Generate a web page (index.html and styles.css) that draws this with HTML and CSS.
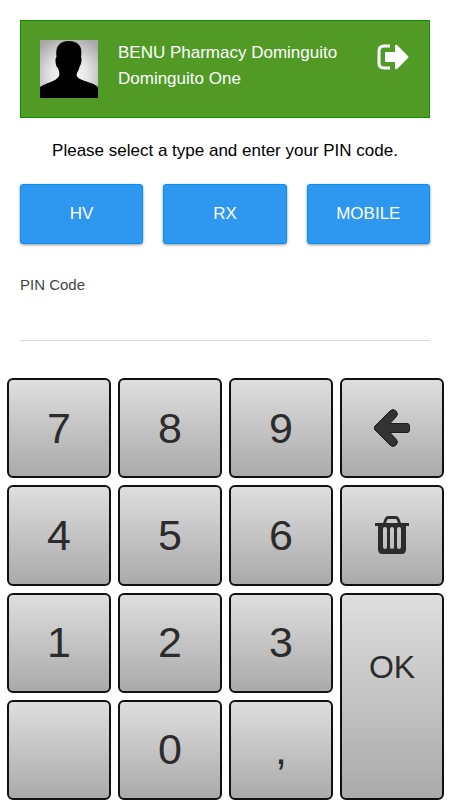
FILE: index.html
```html
<!DOCTYPE html>
<html lang="en">
<head>
  <meta charset="utf-8">
  <meta name="viewport" content="width=device-width, initial-scale=1">
  <title>BENU Pharmacy Dominguito</title>
  <link rel="stylesheet" href="styles.css">
</head>
<body>
  <form class="login">
    <header class="account">
      <svg class="avatar" viewBox="0 0 58 58" role="img" aria-label="User photo">
        <defs>
          <radialGradient id="backdrop" cx="0.5" cy="0.6" r="0.7">
            <stop offset="0" stop-color="#fff"/>
            <stop offset="0.45" stop-color="#e6e6e6"/>
            <stop offset="1" stop-color="#a8a8a8"/>
          </radialGradient>
        </defs>
        <rect width="58" height="58" fill="url(#backdrop)"/>
        <path d="M0 58V47C5 43 16 42 19 36C20 34 19 31 18 28C16 27 15.500 23 15.500 20C15.500 18 16 18 16.500 17C15 6 20 1 28.500 1C38 1 43 6 41 17C42 18 41.500 23 40.500 25C39.500 26 39 30 37 33C36 36 37 37 40 39C46 42 54 43 58 47V58Z"/>
      </svg>
      <div class="names">
        <div>BENU Pharmacy Dominguito</div>
        <div>Dominguito One</div>
      </div>
      <button class="logout" type="button" aria-label="Log out">
        <svg viewBox="0 0 32 26" width="32" height="26">
          <path d="M13 2H7Q2 2 2 7V19Q2 24 7 24H13" fill="none" stroke="#fff" stroke-width="3"/>
          <path d="M9 8H18V2Q18 0 20 1L31 12Q32 13 31 14L20 25Q18 26 18 24V18H9Q8 18 8 17V9Q8 8 9 8Z" fill="#fff"/>
        </svg>
      </button>
    </header>
    <p class="prompt">Please select a type and enter your PIN code.</p>
    <div class="types">
      <button class="type" type="button">HV</button>
      <button class="type" type="button">RX</button>
      <button class="type" type="button">MOBILE</button>
    </div>
    <div class="field">
      <label for="pin">PIN Code</label>
      <input id="pin" type="password" autocomplete="off">
    </div>
    <div class="keypad">
      <button class="key" type="button">7</button>
      <button class="key" type="button">8</button>
      <button class="key" type="button">9</button>
      <button class="key" type="button" aria-label="Back">
        <svg viewBox="0 0 36 38" width="36" height="38">
          <path d="M1 17L16 2Q19 -1 22 2Q25 5 22 8L16 14.500H33Q35.500 14.500 35.500 17V21Q35.500 23.500 33 23.500H16L22 30Q25 33 22 36Q19 39 16 36L1 21Q-1 19 1 17Z"/>
        </svg>
      </button>
      <button class="key" type="button">4</button>
      <button class="key" type="button">5</button>
      <button class="key" type="button">6</button>
      <button class="key" type="button" aria-label="Clear">
        <svg class="trash" viewBox="0 0 36 38" width="36" height="38">
          <path d="M9 7L11 2Q12 0 14 0H22Q24 0 25 2L27 7H35V10H32V33Q32 38 28 38H8Q4 38 4 33V10H1V7ZM12 7H24L23 4Q22.500 3 21 3H15Q13.500 3 13 4ZM9 13V31Q9 33 11 33Q13 33 13 31V13Q13 11 11 11Q9 11 9 13ZM16 13V31Q16 33 18 33Q20 33 20 31V13Q20 11 18 11Q16 11 16 13ZM23 13V31Q23 33 25 33Q27 33 27 31V13Q27 11 25 11Q23 11 23 13Z" fill-rule="evenodd"/>
        </svg>
      </button>
      <button class="key" type="button">1</button>
      <button class="key" type="button">2</button>
      <button class="key" type="button">3</button>
      <button class="key key-ok" type="submit">OK</button>
      <button class="key" type="button" aria-label="Blank"></button>
      <button class="key" type="button">0</button>
      <button class="key" type="button">,</button>
    </div>
  </form>
</body>
</html>
```
FILE: styles.css
```css
* {
  box-sizing: border-box;
}

body {
  margin: 0;
  background: #fff;
  color: #000;
  font-family: "Liberation Sans", Arial, sans-serif;
  font-size: 17px;
}

button,
input {
  font: inherit;
}

button {
  padding: 0;
  cursor: pointer;
}

.login {
  display: flex;
  flex-direction: column;
  min-height: 100vh;
  padding-top: 20px;
}

.account {
  display: flex;
  align-items: flex-start;
  gap: 20px;
  margin: 0 20px;
  padding: 19px;
  border: 1px solid #0a8f00;
  background: #519a26;
  color: #fff;
}

.avatar {
  flex: none;
  width: 58px;
  height: 58px;
}

.names {
  flex: 1;
  line-height: 26px;
}

.logout {
  display: flex;
  margin: 4px 1px 0 0;
  border: 0;
  background: none;
}

.prompt {
  margin: 20px;
  line-height: 26px;
  text-align: center;
}

.types {
  display: grid;
  grid-template-columns: repeat(3, 1fr);
  gap: 20px;
  margin: 0 20px;
}

.type {
  height: 60px;
  border: 1px solid #0a8eef;
  border-radius: 3px;
  background: #2e97f0;
  box-shadow: 0 1px 3px rgba(0, 0, 0, 0.4);
  color: #fff;
}

.field {
  display: flex;
  flex-direction: column;
  margin: 30px 20px 37px;
  color: #444;
}

.field label {
  font-size: 15px;
  line-height: 22px;
}

.field input {
  width: 100%;
  height: 45px;
  padding: 0;
  border: 0;
  border-bottom: 1px solid #d8d8d8;
  background: none;
  outline: 0;
}

.keypad {
  display: grid;
  flex: 1;
  grid-template-columns: repeat(4, 1fr);
  grid-template-rows: repeat(4, minmax(100px, 1fr));
  gap: 7px;
  padding: 0 6px 0 7px;
}

.key {
  display: flex;
  align-items: center;
  justify-content: center;
  border: 2px solid #111;
  border-radius: 6px;
  background: linear-gradient(#dedede, #aaa);
  color: #2c2c2c;
  font-size: 43px;
}

.key svg {
  fill: #333;
  stroke: #1c1c1c;
  stroke-width: 1px;
}

.key .trash {
  fill: #2c2c2c;
  stroke: none;
}

.key-ok {
  grid-row: span 2;
  align-items: flex-start;
  padding-top: 54px;
  font-size: 32px;
}
```
